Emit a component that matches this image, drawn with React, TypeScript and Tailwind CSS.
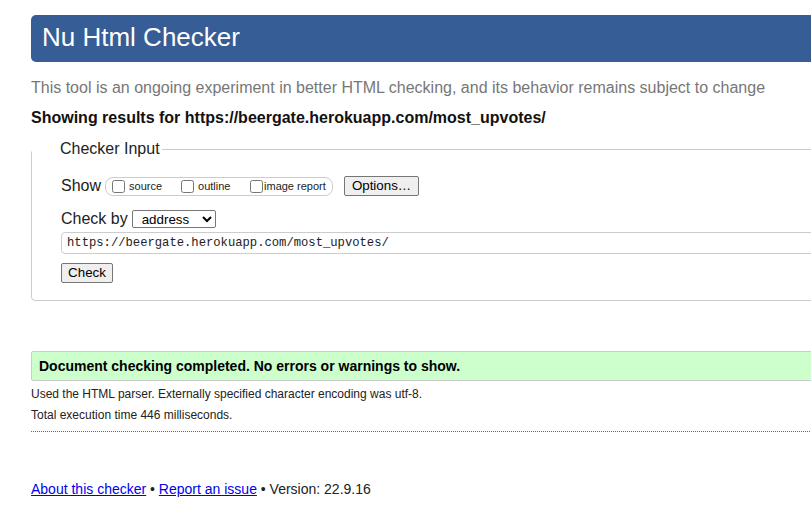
import React from "react";

export default function App() {
  return (
    <div className="w-[811px] h-[521px] overflow-hidden bg-white" style={{ fontFamily: '"Liberation Sans", Arial, sans-serif' }}>
      <div className="w-[1100px] pl-[31px] pt-[15px]">
        <div className="h-[47px] bg-[#365d95] rounded-[5px] flex items-center pl-[11px] pb-[3px]">
          <h1 className="text-white text-[26px] leading-none">Nu Html Checker</h1>
        </div>
        <p className="mt-[17px] text-[16px] leading-[18px] text-[#777]">
          This tool is an ongoing experiment in better HTML checking, and its behavior remains subject to change
        </p>
        <p className="mt-[12px] text-[16px] leading-[18px] font-bold text-[#111]">
          Showing results for https://beergate.herokuapp.com/most_upvotes/
        </p>
        <fieldset className="mt-[13px] border border-[#ccc] rounded-[4px] pl-[29px] h-[161px]">
          <legend className="ml-[-29px] pl-[27px] pr-[1px] text-[16px] leading-[18px] text-[#222]">
            <span className="px-[1px]">Checker Input</span>
          </legend>
          <div className="mt-[18px] flex items-center h-[20px]">
            <span className="text-[16px] text-[#222]">Show</span>
            <div className="ml-[4px] h-[19px] w-[228px] border border-[#ccc] rounded-[8px] flex items-center pl-[6px]">
              <label className="flex items-center w-[69px] text-[11px] text-[#222]">
                <input type="checkbox" className="m-0 w-[13px] h-[13px]" />
                <span className="ml-[4px]">source</span>
              </label>
              <label className="flex items-center w-[69px] text-[11px] text-[#222]">
                <input type="checkbox" className="m-0 w-[13px] h-[13px]" />
                <span className="ml-[4px]">outline</span>
              </label>
              <label className="flex items-center text-[11px] text-[#222]">
                <input type="checkbox" className="m-0 w-[13px] h-[13px]" />
                <span className="ml-[1px]">image report</span>
              </label>
            </div>
            <button className="ml-[11px] h-[20px] w-[75px] bg-[#efefef] border border-[#767676] rounded-[2px] text-[13.33px] text-black leading-none">
              Options…
            </button>
          </div>
          <div className="mt-[14px] flex items-center h-[18px]">
            <span className="text-[16px] text-[#222]">Check by</span>
            <select className="ml-[4px] h-[18px] w-[84px] border border-[#767676] rounded-[2px] text-[13.33px] text-black pl-[5px] bg-white" defaultValue="address">
              <option value="address">address</option>
            </select>
          </div>
          <div className="mt-[4px] h-[22px] w-[900px] border border-[#ccc] rounded-[4px] flex items-center pl-[5px]">
            <span className="text-[12.2px] text-[#222]" style={{ fontFamily: '"Liberation Mono", monospace' }}>
              https://beergate.herokuapp.com/most_upvotes/
            </span>
          </div>
          <button className="mt-[9px] h-[20px] w-[52px] bg-[#efefef] border border-[#767676] rounded-[2px] text-[13.33px] text-black leading-none">
            Check
          </button>
        </fieldset>
        <div className="mt-[50px] h-[30px] bg-[#ccffcc] border border-[#ccc] rounded-[2px] flex items-center pl-[7px]">
          <span className="font-bold text-[14px] text-black">Document checking completed. No errors or warnings to show.</span>
        </div>
        <p className="mt-[6px] text-[12px] leading-[14px] text-[#222]">
          Used the HTML parser. Externally specified character encoding was utf-8.
        </p>
        <p className="mt-[7px] text-[12px] leading-[14px] text-[#222]">Total execution time 446 milliseconds.</p>
        <div className="mt-[9px] border-t border-dotted border-[#666]" />
        <p className="mt-[49px] text-[14px] leading-[16px] text-[#222]">
          <a href="#" className="text-[#0000ee] underline">About this checker</a> •{" "}
          <a href="#" className="text-[#0000ee] underline">Report an issue</a> • Version: 22.9.16
        </p>
      </div>
    </div>
  );
}
